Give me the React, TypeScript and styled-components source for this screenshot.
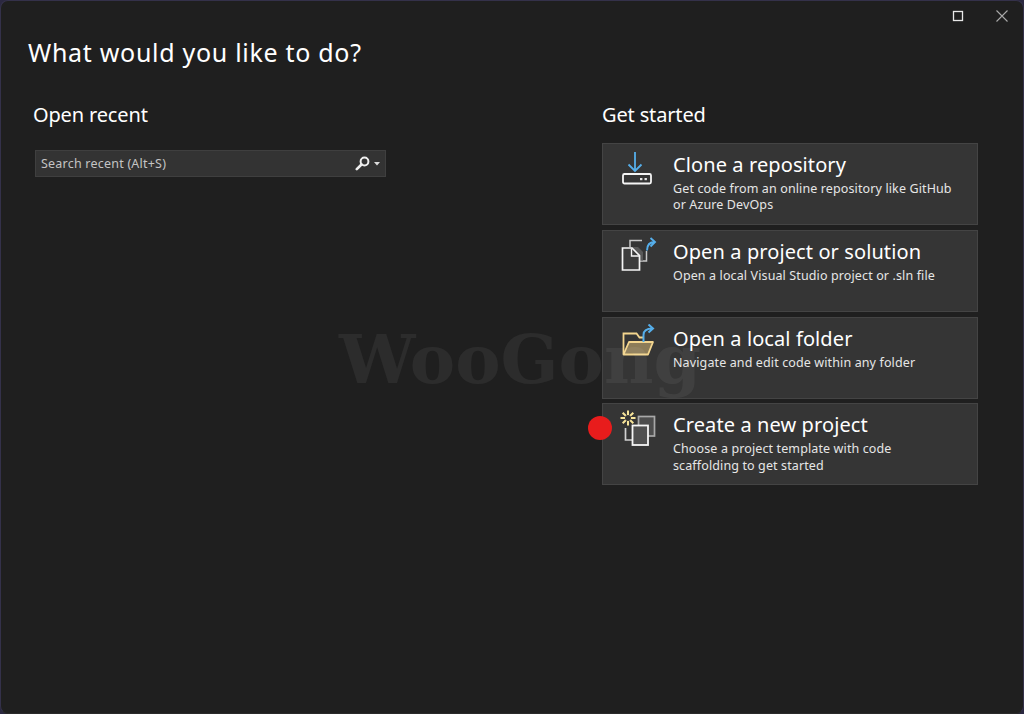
import React from "react";
import styled, { createGlobalStyle } from "styled-components";

const Global = createGlobalStyle`
  html, body { margin: 0; padding: 0; background: #2b2840; }
  #root { width: 1024px; height: 714px; }
`;

const Window = styled.div`
  position: relative;
  box-sizing: border-box;
  width: 1024px;
  height: 714px;
  overflow: hidden;
  background: #1f1f1f;
  border: 1px solid #34314a;
  border-bottom-color: #2a2a2a;
  border-radius: 8px;
  color: #fff;
  font-family: "Noto Sans", "Open Sans", sans-serif;
`;

const TitleBar = styled.div`
  display: flex;
  justify-content: flex-end;
  align-items: center;
  gap: 32px;
  height: 30px;
  padding-right: 15px;
`;

const WinIcon = styled.svg`
  display: block;
  width: 12px;
  height: 12px;
  fill: none;
`;

const Heading = styled.h1`
  margin: 0;
  padding: 3px 0 0 27px;
  height: 50px;
  box-sizing: border-box;
  font-size: 25px;
  line-height: 36px;
  font-weight: 400;
  letter-spacing: 0.7px;
`;

const Columns = styled.div`
  display: grid;
  grid-template-columns: 569px 376px;
  padding-left: 32px;
  padding-top: 19px;
`;

const SectionTitle = styled.h2`
  margin: 0;
  font-size: 20px;
  line-height: 30px;
  font-weight: 400;
  letter-spacing: -0.15px;
`;

const RecentColumn = styled.div`
  display: flex;
  flex-direction: column;
`;

const SearchBox = styled.div`
  box-sizing: border-box;
  display: flex;
  align-items: center;
  justify-content: space-between;
  width: 351px;
  height: 27px;
  margin: 20px 0 0 2px;
  padding: 0 5px;
  background: #333333;
  border: 1px solid #3f3f3f;
  font-size: 12.5px;
  letter-spacing: 0.22px;
  color: #c4c4c4;
`;

const SearchIcons = styled.div`
  display: flex;
  align-items: center;
  gap: 4px;
`;

const StartColumn = styled.div`
  display: flex;
  flex-direction: column;
`;

const CardList = styled.div`
  display: flex;
  flex-direction: column;
  gap: 4.8px;
  margin-top: 13px;
`;

const Card = styled.div`
  box-sizing: border-box;
  display: flex;
  height: 82px;
  padding: 6px 10px 0 15px;
  background: #353535;
  border: 1px solid #444444;
`;

const IconSlot = styled.div`
  flex: 0 0 40px;
  width: 40px;
  margin-right: 15px;
`;

const CardText = styled.div`
  display: flex;
  flex-direction: column;
`;

const CardTitle = styled.div`
  font-size: 20px;
  line-height: 30px;
  letter-spacing: 0.1px;
`;

const CardDesc = styled.div`
  margin-top: 1px;
  font-size: 12.5px;
  line-height: 16.4px;
  letter-spacing: 0.12px;
  color: #e6e6e6;
`;

const Watermark = styled.div`
  position: absolute;
  left: 338px;
  top: 318px;
  font-family: "DejaVu Serif", serif;
  font-weight: 700;
  font-size: 68px;
  line-height: 80px;
  color: rgba(255, 255, 255, 0.06);
  pointer-events: none;
  white-space: nowrap;
`;

const Dot = styled.div`
  position: absolute;
  left: 587px;
  top: 415px;
  width: 24px;
  height: 24px;
  border-radius: 50%;
  background: #e81c1c;
`;

const CloneIcon = () => (
  <svg width="40" height="40" viewBox="0 0 40 40" fill="none">
    <path d="M17 2v19M10.500 14.500l6.500 6.500 6.500-6.500" stroke="#55aeea" strokeWidth="1.800" />
    <rect x="5" y="24" width="28" height="9.500" rx="1.500" stroke="#f5f5f5" strokeWidth="1.800" />
    <rect x="22" y="28" width="2.400" height="2.200" fill="#e8e8e8" />
    <rect x="26.500" y="28" width="2.400" height="2.200" fill="#e8e8e8" />
  </svg>
);

const SolutionIcon = () => (
  <svg width="40" height="40" viewBox="0 0 40 40" fill="none">
    <path d="M12 10V3.500h12" stroke="#c8c8c8" strokeWidth="1.500" />
    <path d="M28.500 14v10H22" stroke="#c8c8c8" strokeWidth="1.500" />
    <path d="M12 10h8l5 5v9h-13z" fill="#6a6a6a" opacity="0.7" />
    <path d="M4.500 11h9.500l7.500 7.500V33H4.500z" fill="#3c3c3c" stroke="#f5f5f5" strokeWidth="1.700" />
    <path d="M13.500 11.500V19h7.500" stroke="#f5f5f5" strokeWidth="1.400" />
    <path d="M29 13.500c0-5.500 3-8.500 8-8.500M32.500 1l4.500 4-4.500 4.500" stroke="#55aeea" strokeWidth="1.900" />
  </svg>
);

const FolderIcon = () => (
  <svg width="40" height="40" viewBox="0 0 40 40" fill="none">
    <path d="M5.500 30V9.500h13l3 4h3.500" stroke="#f3d58e" strokeWidth="1.800" />
    <path d="M31 18.500v-1" stroke="#f3d58e" strokeWidth="1.800" />
    <path d="M5.500 30.500h24.500l5-12.500H11z" fill="#8d7c58" stroke="#f3d58e" strokeWidth="1.800" strokeLinejoin="round" />
    <path d="M25.500 18v-7c0-4 3-6.500 9-6.500M30.500 0.500l4.500 4-4.500 4" stroke="#55aeea" strokeWidth="2" />
  </svg>
);

const NewProjectIcon = () => (
  <svg width="40" height="40" viewBox="0 0 40 40" fill="none" style={{ overflow: "visible" }}>
    <path d="M10 0.500v15M2.500 8h15M4.700 2.700l10.600 10.600M15.300 2.700L4.700 13.300" stroke="#f8e59a" strokeWidth="2" />
    <circle cx="10" cy="8" r="3" fill="#353535" />
    <rect x="20.500" y="6.500" width="16" height="19.500" fill="#6a6a6a" fillOpacity="0.45" stroke="#a8a8a8" strokeWidth="1.700" />
    <path d="M7.500 18v12h7" stroke="#d0d0d0" strokeWidth="1.700" />
    <rect x="14.500" y="15.500" width="15.500" height="19.500" fill="#505050" stroke="#f5f5f5" strokeWidth="1.800" />
  </svg>
);

const cards = [
  { title: "Clone a repository", desc: ["Get code from an online repository like GitHub", "or Azure DevOps"], Icon: CloneIcon },
  { title: "Open a project or solution", desc: ["Open a local Visual Studio project or .sln file"], Icon: SolutionIcon },
  { title: "Open a local folder", desc: ["Navigate and edit code within any folder"], Icon: FolderIcon },
  { title: "Create a new project", desc: ["Choose a project template with code", "scaffolding to get started"], Icon: NewProjectIcon },
];

export default function App() {
  return (
    <>
      <Global />
      <Window>
        <TitleBar>
          <WinIcon viewBox="0 0 12 12">
            <rect x="1.500" y="1.500" width="9" height="9" stroke="#e8e8e8" strokeWidth="1.300" />
          </WinIcon>
          <WinIcon viewBox="0 0 12 12">
            <path d="M0.500 0.500l11 11M11.500 0.500l-11 11" stroke="#a8a8a8" strokeWidth="1.100" />
          </WinIcon>
        </TitleBar>
        <Heading>What would you like to do?</Heading>
        <Columns>
          <RecentColumn>
            <SectionTitle>Open recent</SectionTitle>
            <SearchBox>
              <span>Search recent (Alt+S)</span>
              <SearchIcons>
                <svg width="15" height="15" viewBox="0 0 15 15" fill="none">
                  <circle cx="9.500" cy="5.500" r="3.900" stroke="#eee" strokeWidth="2" />
                  <path d="M6.500 8.500L1.800 13.200" stroke="#eee" strokeWidth="2.600" strokeLinecap="round" />
                </svg>
                <svg width="6" height="4" viewBox="0 0 6 4">
                  <path d="M0 0h6L3 3.500z" fill="#ddd" />
                </svg>
              </SearchIcons>
            </SearchBox>
          </RecentColumn>
          <StartColumn>
            <SectionTitle>Get started</SectionTitle>
            <CardList>
              {cards.map(({ title, desc, Icon }) => (
                <Card key={title}>
                  <IconSlot>
                    <Icon />
                  </IconSlot>
                  <CardText>
                    <CardTitle>{title}</CardTitle>
                    <CardDesc>
                      {desc.map((line) => (
                        <div key={line}>{line}</div>
                      ))}
                    </CardDesc>
                  </CardText>
                </Card>
              ))}
            </CardList>
          </StartColumn>
        </Columns>
        <Watermark>WooGong</Watermark>
        <Dot />
      </Window>
    </>
  );
}
